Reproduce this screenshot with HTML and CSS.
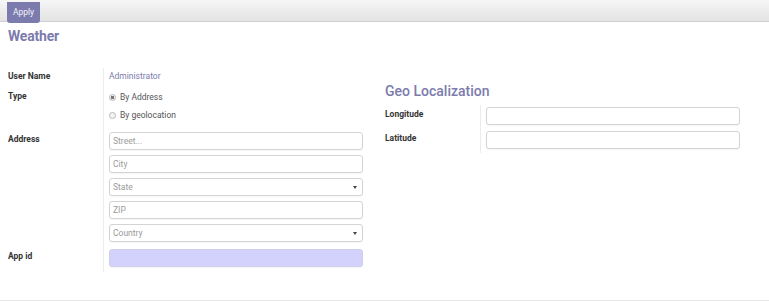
FILE: index.html
```html
<!DOCTYPE html>
<html lang="en">
<head>
  <meta charset="UTF-8">
  <title>Weather</title>
  <link rel="stylesheet" href="styles.css">
</head>
<body>
  <div class="control-panel">
    <button class="btn-apply">Apply</button>
  </div>

  <div class="sheet">
    <h1 class="title">Weather</h1>

    <div class="groups">
      <div class="group group-left">
        <div class="field field-user">
          <div class="field-label">User Name</div>
          <div class="field-value user-name"><a href="#">Administrator</a></div>
        </div>
        <div class="field">
          <div class="field-label">Type</div>
          <div class="field-value radios">
            <label class="radio"><input type="radio" name="type" checked> By Address</label>
            <label class="radio"><input type="radio" name="type"> By geolocation</label>
          </div>
        </div>
        <div class="field field-address">
          <div class="field-label">Address</div>
          <div class="field-value address">
            <input type="text" class="input" placeholder="Street...">
            <input type="text" class="input" placeholder="City">
            <div class="select"><span>State</span><i class="caret"></i></div>
            <input type="text" class="input" placeholder="ZIP">
            <div class="select"><span>Country</span><i class="caret"></i></div>
          </div>
        </div>
        <div class="field field-appid">
          <div class="field-label">App id</div>
          <div class="field-value">
            <input type="text" class="input required">
          </div>
        </div>
      </div>

      <div class="group group-right">
        <h2 class="group-title">Geo Localization</h2>
        <div class="field">
          <div class="field-label">Longitude</div>
          <div class="field-value"><input type="text" class="input"></div>
        </div>
        <div class="field">
          <div class="field-label">Latitude</div>
          <div class="field-value"><input type="text" class="input"></div>
        </div>
      </div>
    </div>
  </div>
</body>
</html>
```

FILE: styles.css
```css
body {
  font-family: Roboto, 'Liberation Sans', Arial, sans-serif;
  margin: 0;
  padding: 0;
  background-color: white;
  color: #4c4c4c;
}
.control-panel {
  height: 22px;
  box-sizing: border-box;
  background: linear-gradient(#f6f6f6, #e3e3e3);
  border-bottom: 1px solid #cfcfcf;
  padding-left: 7px;
}
.btn-apply {
  height: 21px;
  width: 33px;
  padding: 0;
  border: none;
  border-radius: 0 0 3px 3px;
  background-color: #7c7bad;
  color: #f4f4fb;
  font-family: inherit;
  font-size: 8.5px;
}
.sheet {
  padding: 0 8px;
  height: 278px;
  border-bottom: 1px solid #e8e8e8;
}
.title {
  margin: 0;
  padding-top: 6px;
  font-size: 14px;
  font-weight: bold;
  color: #7c7bad;
  line-height: 17px;
  letter-spacing: -0.2px;
}
.groups {
  display: flex;
  margin-top: 23px;
}
.group-left {
  width: 354px;
}
.group-right {
  margin-left: 23px;
  width: 355px;
}
.group-title {
  margin: 14px 0 5px;
  font-size: 14px;
  font-weight: 500;
  line-height: 18px;
  color: #7c7bad;
}
.field {
  display: flex;
}
.field-label {
  width: 95px;
  flex-shrink: 0;
  font-size: 8.5px;
  font-weight: bold;
  color: #333;
  line-height: 16px;
}
.field-value {
  flex: 1;
  border-left: 1px solid #ececec;
  padding-left: 5px;
  font-size: 8.5px;
  line-height: 16px;
}
.field-user .field-value {
  height: 20px;
}
.user-name a {
  color: #7c7bad;
  text-decoration: none;
}
.radios {
  display: flex;
  flex-direction: column;
  padding-bottom: 6px;
}
.radio {
  display: flex;
  align-items: center;
  height: 18px;
  color: #555;
}
.radio input {
  appearance: none;
  box-sizing: border-box;
  margin: 0 4px 0 0;
  width: 7px;
  height: 7px;
  border: 1px solid #b8b8b8;
  border-radius: 50%;
  background: #f4f4f4;
}
.radio input:checked {
  background: radial-gradient(circle, #777 0 1.6px, #f0f0f0 2px);
}
.field-address .field-label {
  padding-top: 1px;
}
.address {
  display: flex;
  flex-direction: column;
  gap: 5px;
  padding-top: 2px;
}
.field-appid .field-value {
  padding-top: 7px;
  padding-bottom: 5px;
}
.field-appid .field-label {
  padding-top: 6px;
}
.input,
.select {
  display: block;
  box-sizing: border-box;
  width: 254px;
  height: 18px;
  margin: 0;
  padding: 0 3px;
  border: 1px solid #d4d4d4;
  border-radius: 3px;
  box-shadow: 0 1px 1px rgba(0, 0, 0, 0.04);
  background: white;
  font-family: inherit;
  font-size: 8.5px;
  color: #555;
}
.input::placeholder {
  color: #9a9a9a;
}
.select {
  display: flex;
  align-items: center;
  justify-content: space-between;
  color: #9a9a9a;
}
.caret {
  width: 0;
  height: 0;
  border-left: 2px solid transparent;
  border-right: 2px solid transparent;
  border-top: 3px solid #444;
  margin-right: 2px;
}
.input.required {
  background-color: #d2d2fd;
  border-color: #cfcfe8;
}
.group-right .field-label {
  line-height: 12px;
  padding-top: 3px;
}
.group-right .field-value {
  padding-top: 2px;
  padding-bottom: 4px;
}
```
